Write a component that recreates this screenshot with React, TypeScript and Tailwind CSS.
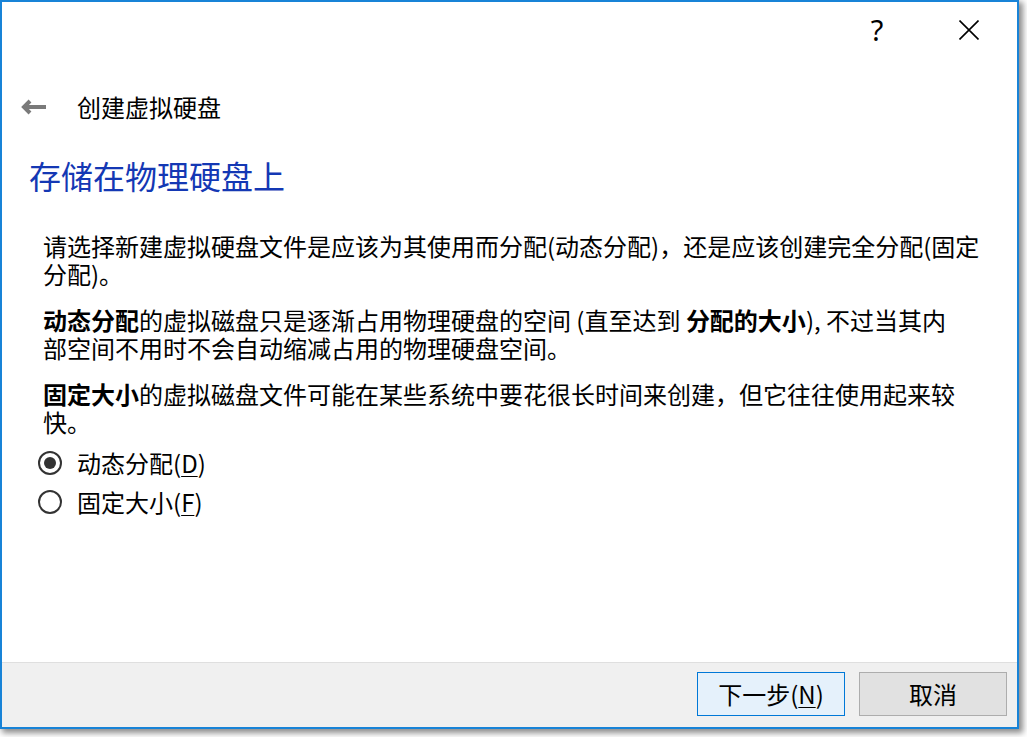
import React from "react";

const cjk = { fontFamily: '"Noto Sans CJK SC", "Noto Sans", sans-serif' };

function Radio({ checked, label, accel }: { checked: boolean; label: string; accel: string }) {
  return (
    <div className="flex h-[39px] items-center">
      <div className="ml-[36px] flex h-[24px] w-[24px] items-center justify-center rounded-full border-2 border-[#333333] bg-white">
        {checked && <div className="h-[12px] w-[12px] rounded-full bg-[#333333]" />}
      </div>
      <div className="ml-[15px] text-[24px] leading-[28px] text-black">
        {label}(<span className="underline underline-offset-[3px] decoration-1">{accel}</span>)
      </div>
    </div>
  );
}

export default function App() {
  return (
    <div className="h-[737px] w-[1027px] overflow-hidden bg-white" style={cjk}>
      <div className="flex h-[729px] w-[1019px] flex-col border-2 border-[#1883d7] bg-white shadow-[3px_3px_6px_1px_rgba(0,0,0,0.45)]">
        {/* title bar */}
        <div className="flex h-[58px] justify-end pr-[2px]">
          <div className="flex h-[58px] w-[92px] items-center justify-center pb-[4px] text-[29px] leading-none text-black" style={{ fontFamily: '"Noto Sans", sans-serif' }}>
            ?
          </div>
          <div className="flex h-[58px] w-[92px] items-center justify-center pb-[2px]">
            <svg width="20" height="20" viewBox="0 0 20 20">
              <path d="M0.5 0.5 L19.5 19.5 M19.5 0.5 L0.5 19.5" stroke="#000" strokeWidth="1.6" fill="none" />
            </svg>
          </div>
        </div>

        {/* page title */}
        <div className="mt-[24px] flex h-[46px] items-center">
          <svg className="ml-[19px]" width="26" height="16" viewBox="0 0 26 16">
            <path d="M9 2 L3 8 L9 14" stroke="#7a7a7a" strokeWidth="4" fill="none" strokeLinejoin="miter" strokeLinecap="butt" />
            <path d="M4 8 H25" stroke="#7a7a7a" strokeWidth="4" />
          </svg>
          <div className="ml-[30px] text-[24px] leading-[30px] text-black">创建虚拟硬盘</div>
        </div>

        {/* heading */}
        <div className="ml-[27px] mt-[25px] h-[40px] text-[32px] leading-[40px] text-[#1438b4]">存储在物理硬盘上</div>

        {/* body */}
        <div className="ml-[41px] mt-[37px] whitespace-nowrap text-[24px] leading-[28px] text-black">
          <p>
            请选择新建虚拟硬盘文件是应该为其使用而分配(动态分配)，还是应该创建完全分配(固定
            <br />
            分配)。
          </p>
          <p className="mt-[18px]">
            <b className="font-bold">动态分配</b>的虚拟磁盘只是逐渐占用物理硬盘的空间 (直至达到 <b className="font-bold">分配的大小</b>), 不过当其内
            <br />
            部空间不用时不会自动缩减占用的物理硬盘空间。
          </p>
          <p className="mt-[18px]">
            <b className="font-bold">固定大小</b>的虚拟磁盘文件可能在某些系统中要花很长时间来创建，但它往往使用起来较
            <br />
            快。
          </p>
        </div>

        <div className="mt-[7px] flex flex-col">
          <Radio checked label="动态分配" accel="D" />
          <Radio checked={false} label="固定大小" accel="F" />
        </div>

        <div className="flex-1" />

        {/* footer */}
        <div className="flex h-[65px] items-start justify-end gap-[14px] border-t border-[#dfdfdf] bg-[#f0f0f0] pr-[10px] pt-[9px]">
          <button className="flex h-[44px] w-[148px] items-center justify-center border border-[#0078d7] bg-[#e5f1fb] text-[24px] leading-none text-black">
            下一步(<span className="underline underline-offset-[3px] decoration-1">N</span>)
          </button>
          <button className="flex h-[44px] w-[148px] items-center justify-center border border-[#adadad] bg-[#e1e1e1] text-[24px] leading-none text-black">
            取消
          </button>
        </div>
      </div>
    </div>
  );
}
